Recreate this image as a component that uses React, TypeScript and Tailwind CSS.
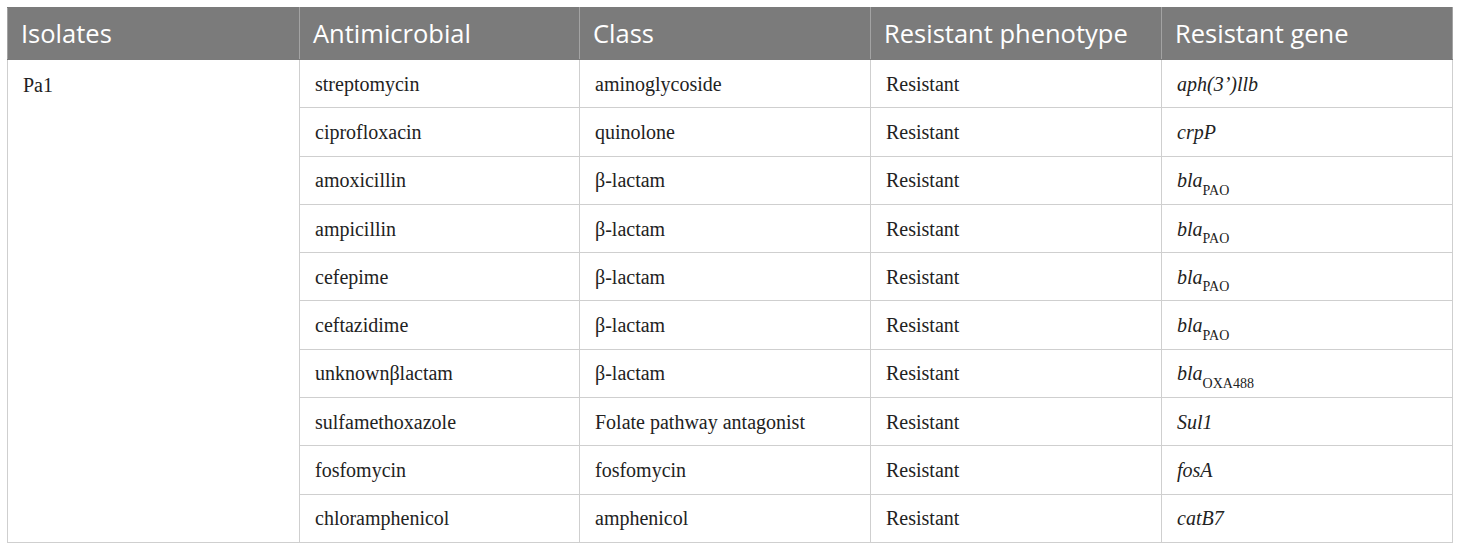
import type { ReactNode } from 'react';

interface Row {
  antimicrobial: string;
  cls: string;
  phenotype: string;
  gene: ReactNode;
}

const Bla = ({ sub }: { sub: string }) => (
  <>
    <i>bla</i>
    <sub className="text-[14px] not-italic align-[-4px] leading-none">{sub}</sub>
  </>
);

const rows: Row[] = [
  { antimicrobial: 'streptomycin', cls: 'aminoglycoside', phenotype: 'Resistant', gene: <i>aph(3’)llb</i> },
  { antimicrobial: 'ciprofloxacin', cls: 'quinolone', phenotype: 'Resistant', gene: <i>crpP</i> },
  { antimicrobial: 'amoxicillin', cls: 'β-lactam', phenotype: 'Resistant', gene: <Bla sub="PAO" /> },
  { antimicrobial: 'ampicillin', cls: 'β-lactam', phenotype: 'Resistant', gene: <Bla sub="PAO" /> },
  { antimicrobial: 'cefepime', cls: 'β-lactam', phenotype: 'Resistant', gene: <Bla sub="PAO" /> },
  { antimicrobial: 'ceftazidime', cls: 'β-lactam', phenotype: 'Resistant', gene: <Bla sub="PAO" /> },
  { antimicrobial: 'unknownβlactam', cls: 'β-lactam', phenotype: 'Resistant', gene: <Bla sub="OXA488" /> },
  { antimicrobial: 'sulfamethoxazole', cls: 'Folate pathway antagonist', phenotype: 'Resistant', gene: <i>Sul1</i> },
  { antimicrobial: 'fosfomycin', cls: 'fosfomycin', phenotype: 'Resistant', gene: <i>fosA</i> },
  { antimicrobial: 'chloramphenicol', cls: 'amphenicol', phenotype: 'Resistant', gene: <i>catB7</i> },
];

const headers = ['Isolates', 'Antimicrobial', 'Class', 'Resistant phenotype', 'Resistant gene'];
const widths = ['w-[292px]', 'w-[280px]', 'w-[291px]', 'w-[291px]', 'w-[291px]'];

export default function App() {
  const cell = 'border border-[#cfcfcf] px-[15px] align-middle text-left font-normal';

  return (
    <div className="w-[1460px] h-[550px] bg-white pt-[7px] px-[7px]">
      <table className="table-fixed border-collapse w-[1446px] font-['Liberation_Serif',serif] text-[20px] text-[#222]">
        <colgroup>
          {widths.map((w, i) => (
            <col key={i} className={w} />
          ))}
        </colgroup>
        <thead>
          <tr className="h-[52px] bg-[#7b7b7b]">
            {headers.map((h) => (
              <th
                key={h}
                className="border border-x-[#a3a3a3] border-y-[#7b7b7b] pl-[13px] pr-[15px] text-left font-normal text-white font-['Open_Sans',sans-serif] text-[25.5px]"
              >
                {h}
              </th>
            ))}
          </tr>
        </thead>
        <tbody>
          {rows.map((r, i) => (
            <tr key={r.antimicrobial} className="h-[48.3px]">
              {i === 0 && (
                <td rowSpan={rows.length} className={`${cell} align-top pt-[10px]`}>
                  Pa1
                </td>
              )}
              <td className={cell}>{r.antimicrobial}</td>
              <td className={cell}>{r.cls}</td>
              <td className={cell}>{r.phenotype}</td>
              <td className={cell}>{r.gene}</td>
            </tr>
          ))}
        </tbody>
      </table>
    </div>
  );
}
